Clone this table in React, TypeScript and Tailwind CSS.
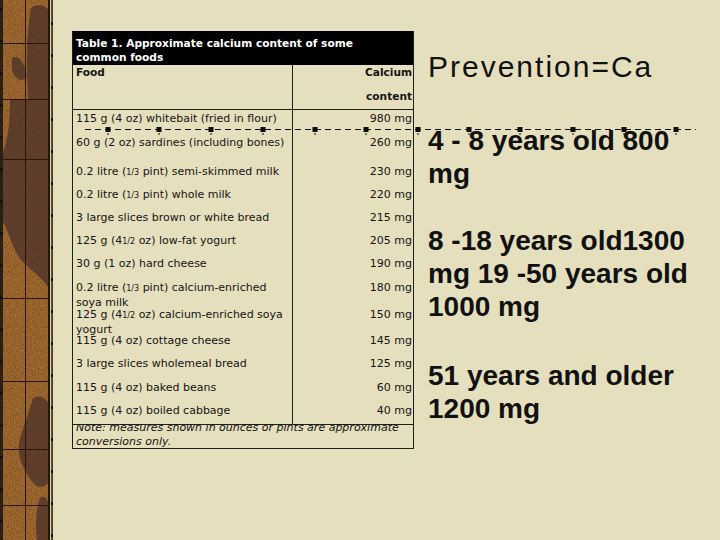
import React from 'react';

type Row = { food: React.ReactNode; ca: string; h: number };

const Frac = ({ children }: { children: React.ReactNode }) => (
  <span className="text-[8px]">{children}</span>
);

const rows: Row[] = [
  { food: '115 g (4 oz) whitebait (fried in flour)', ca: '980 mg', h: 24 },
  { food: '60 g (2 oz) sardines (including bones)', ca: '260 mg', h: 29 },
  { food: <>0.2 litre (<Frac>1/3</Frac> pint) semi-skimmed milk</>, ca: '230 mg', h: 23 },
  { food: <>0.2 litre (<Frac>1/3</Frac> pint) whole milk</>, ca: '220 mg', h: 23 },
  { food: '3 large slices brown or white bread', ca: '215 mg', h: 23 },
  { food: <>125 g (4<Frac>1/2</Frac> oz) low-fat yogurt</>, ca: '205 mg', h: 23 },
  { food: '30 g (1 oz) hard cheese', ca: '190 mg', h: 24 },
  {
    food: <>0.2 litre (<Frac>1/3</Frac> pint) calcium-enriched<br />soya milk</>,
    ca: '180 mg',
    h: 27,
  },
  {
    food: <>125 g (4<Frac>1/2</Frac> oz) calcium-enriched soya<br />yogurt</>,
    ca: '150 mg',
    h: 26,
  },
  { food: '115 g (4 oz) cottage cheese', ca: '145 mg', h: 23 },
  { food: '3 large slices wholemeal bread', ca: '125 mg', h: 24 },
  { food: '115 g (4 oz) baked beans', ca: '60 mg', h: 23 },
  { food: '115 g (4 oz) boiled cabbage', ca: '40 mg', h: 22 },
];

const stripLines = [43, 99, 159, 298, 381, 449, 505];

function Strip() {
  const ticks = Array.from({ length: 17 }, (_, i) => 8 + i * 32);
  return (
    <svg width="53" height="540" viewBox="0 0 53 540" className="shrink-0 block">
      <defs>
        <filter id="grain" x="0" y="0" width="100%" height="100%">
          <feTurbulence type="fractalNoise" baseFrequency="0.95" numOctaves="2" stitchTiles="stitch" />
          <feColorMatrix
            type="matrix"
            values="0 0 0 0 0.12  0 0 0 0 0.06  0 0 0 0 0.02  0 0 0 1.6 -0.55"
          />
        </filter>
      </defs>
      <rect x="0" y="0" width="53" height="540" fill="#2b1e12" />
      <rect x="3" y="0" width="46" height="540" fill="#a86c2d" />
      <g fill="#5c3a2b">
        <path d="M31 8 C40 2 49 6 49 14 L49 112 L29 112 C27 80 25 40 31 8 Z" />
        <path d="M12 58 C18 54 25 62 27 76 C23 84 14 79 12 70 Z" />
        <path d="M10 100 L49 100 L49 288 C42 278 31 270 21 260 C13 250 9 232 3 222 L3 152 C8 140 10 122 10 100 Z" />
        <path d="M33 398 C40 394 46 398 49 404 L49 482 C41 492 33 486 26 472 C19 461 16 446 22 432 C26 421 29 410 33 398 Z" />
        <path d="M40 498 C45 494 49 500 49 510 L49 540 L37 540 C35 524 36 510 40 498 Z" />
      </g>
      <rect x="3" y="0" width="46" height="540" filter="url(#grain)" />
      <rect x="25" y="0" width="1" height="540" fill="#2a1608" />
      {stripLines.map((y) => (
        <rect key={y} x="3" y={y} width="46" height="1" fill="#2a1608" />
      ))}
      <rect x="48" y="0" width="1.5" height="540" fill="#1e140a" />
      <rect x="50" y="0" width="1.5" height="540" fill="#d9cfa8" />
      <rect x="51.5" y="0" width="1.5" height="540" fill="#4a3a22" />
      {ticks.map((y) => (
        <g key={y} fill="#15100a">
          <rect x="0" y={y} width="3" height="3" />
          <rect x="51" y={y + 14} width="2" height="3" />
        </g>
      ))}
    </svg>
  );
}

function SelectionLine() {
  const handles = [108, 159, 211, 263, 315, 366, 418, 469, 520, 573, 624, 676];
  return (
    <div className="absolute left-0 top-[124px] w-[720px] h-[12px] pointer-events-none">
      <svg width="720" height="12" viewBox="0 0 720 12" className="block">
        <line x1="85" y1="5.5" x2="696" y2="5.5" stroke="#111" strokeWidth="1" strokeDasharray="6 4" />
        {handles.map((x) => (
          <g key={x} fill="#0d0d0d">
            <rect x={x - 2.5} y="3" width="5" height="5" />
            <rect x={x - 0.5} y="9" width="1" height="2" />
          </g>
        ))}
      </svg>
    </div>
  );
}

function CalciumTable() {
  return (
    <div className="ml-[19px] mt-[31px] w-[342px] self-start border border-[#1e1e1e] border-t-0 font-['DejaVu_Sans',Verdana,sans-serif] text-[#141414]">
      <div className="h-[34px] bg-black pt-[5px] pl-[3px] text-[10.6px] leading-[14px] font-bold text-white">
        Table 1. Approximate calcium content of some
        <br />
        common foods
      </div>
      <div className="grid grid-cols-[220px_1fr] h-[45px] border-b border-[#1e1e1e] text-[10.6px] leading-[14px] font-bold">
        <div className="border-r border-[#1e1e1e] pl-[3px]">Food</div>
        <div className="text-right pr-[1px]">
          <div>Calcium</div>
          <div className="mt-[10px]">content</div>
        </div>
      </div>
      {rows.map((r, i) => (
        <div
          key={i}
          className="grid grid-cols-[220px_1fr] text-[11px] leading-[14px]"
          style={{ height: r.h }}
        >
          <div className="border-r border-[#1e1e1e] pl-[3px] pt-[2px] whitespace-nowrap">{r.food}</div>
          <div className="text-right pr-[1px] pt-[2px]">{r.ca}</div>
        </div>
      ))}
      <div className="h-[24px] border-t border-[#1e1e1e] overflow-hidden pl-[3px]">
        <div className="-mt-[4px] italic text-[11px] leading-[14px]">
          Note: measures shown in ounces or pints are approximate
          <br />
          conversions only.
        </div>
      </div>
    </div>
  );
}

export default function App() {
  return (
    <div className="relative flex w-[720px] h-[540px] overflow-hidden bg-[#e6dfbe]">
      <Strip />
      <CalciumTable />
      <div className="ml-[14px] mt-[50px] w-[285px] font-['Liberation_Sans',Arial,sans-serif] text-[#111]">
        <div className="text-[30px] leading-[33px] tracking-[2px]">Prevention=Ca</div>
        <div className="mt-[41px] text-[28px] leading-[33px] font-bold">4 - 8 years old 800 mg</div>
        <div className="mt-[34px] text-[28px] leading-[33px] font-bold">
          8 -18 years old1300 mg 19 -50 years old 1000 mg
        </div>
        <div className="mt-[36px] text-[28px] leading-[33px] font-bold">51 years and older 1200 mg</div>
      </div>
      <SelectionLine />
    </div>
  );
}
